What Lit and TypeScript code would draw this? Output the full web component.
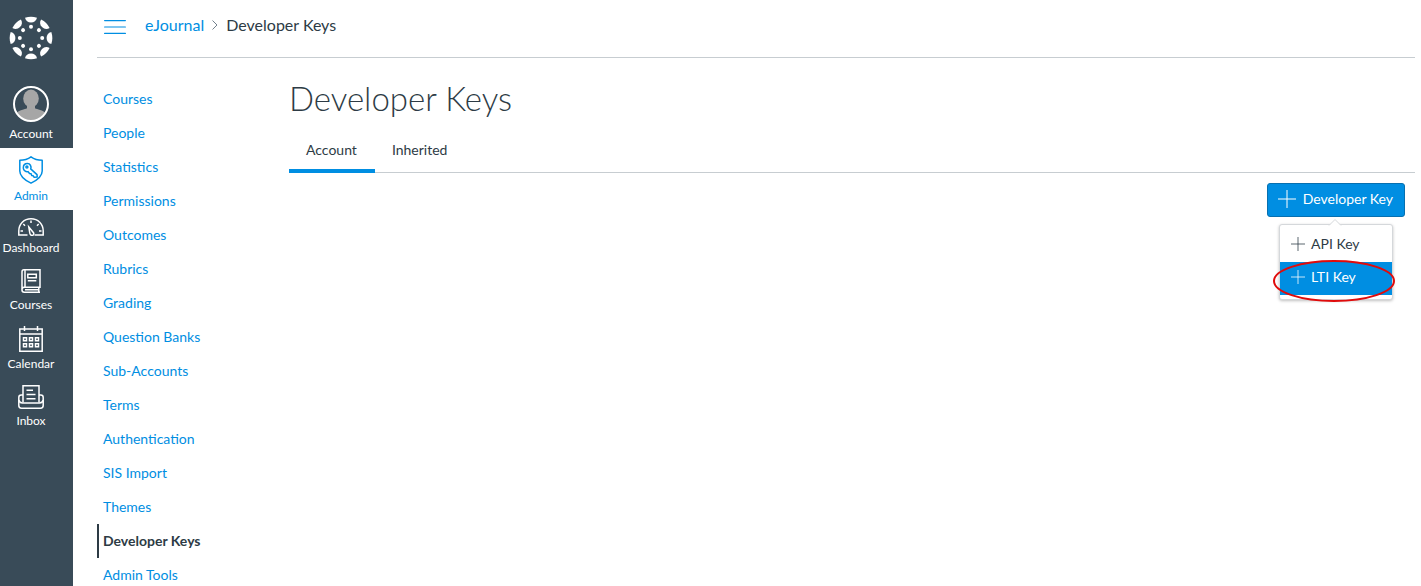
import { LitElement, html, css, svg } from "lit";
import { customElement, state } from "lit/decorators.js";

const ring = Array.from({ length: 8 }, (_, i) => i * 45);

const logo = html`<svg width="44" height="44" viewBox="0 0 44 44" fill="#fff" aria-hidden="true">
  ${ring.map(
    (a) => svg`<g transform=${`rotate(${a} 22 22)`}>
      <path d="M16 1.700 Q22 -.4 28 1.700 C27.300 4.900 25 6.400 22 6.400 C19 6.400 16.700 4.900 16 1.700Z"/>
      <circle cx="22" cy="10.800" r="2"/>
    </g>`
  )}
</svg>`;

const avatar = html`<svg width="36" height="36" viewBox="0 0 36 36" aria-hidden="true">
  <defs><clipPath id="face"><circle cx="18" cy="18" r="16.5"/></clipPath></defs>
  <g clip-path="url(#face)" fill="#a6a6a6">
    <ellipse cx="18" cy="12.5" rx="7.8" ry="9"/>
    <path d="M14 18h8v4.2c2 1.4 8 1.2 11 5.3V36H3v-8.5c3-4.1 9-3.9 11-5.3z"/>
  </g>
  <circle cx="18" cy="18" r="17" fill="none" stroke="#fff" stroke-width="2"/>
</svg>`;

const shield = html`<svg width="26" height="28" viewBox="0 0 26 28" fill="none" stroke="currentColor" stroke-width="1.5" stroke-linejoin="round" aria-hidden="true">
  <path d="M13 .8C10 3 5.5 4.2 1.8 4.2V15c0 5.5 5.7 9.5 11.2 12.2C18.500 24.5 24.2 20.5 24.2 15V4.2C20.5 4.2 16 3 13 .8z"/>
  <path d="M12.700 12.900l6.300 5.700.2 2.500-3 .2-1-1.500-1.500-.3-.6-1.700-1.600-.3-1.400-1.900c-2.200.6-4.800-1.100-4.800-3.700 0-2.500 1.800-4.300 4.200-4.300 2.500 0 4.200 2.600 3.200 5.300z"/>
  <circle cx="8.900" cy="11" r="1"/>
</svg>`;

const gauge = html`<svg width="26" height="18" viewBox="0 0 26 18" fill="none" stroke="currentColor" stroke-width="1.5" aria-hidden="true">
  <path d="M9.500 17H.8v-4C.8 6 6 .8 13 .8S25.200 6 25.200 13v4h-8.700"/>
  <path d="M10.800 9l4.700 5.700c1 2-1.300 3.500-2.800 2.200-.9-.8-.9-1.500-1-2.400z"/>
  <path d="M13 2.500V5M5.300 6l1.700 1.700M20.700 6L19 7.700M2.500 13H5M21 13h2.500"/>
</svg>`;

const book = html`<svg width="20" height="24" viewBox="0 0 20 24" fill="none" stroke="currentColor" stroke-width="1.5" aria-hidden="true">
  <path d="M1 20.500V2.800C1 1.500 1.800.8 3 .8h16v17.400H3.200c-3 0-3 5 0 5H19M4 .8v17.400M17.800 18.200v5M4 20.700h14"/>
  <path d="M6.800 5.200h8.500v3.500H6.800zM6.800 11.700h8.500"/>
</svg>`;

const calendar = html`<svg width="24" height="26" viewBox="0 0 24 26" fill="none" stroke="currentColor" stroke-width="1.5" aria-hidden="true">
  <path d="M.8 3h22.400v22.200H.8zM.8 8h22.400M5.500 0v5M18.500 0v5"/>
  <path d="M4.500 11.700h3v3h-3zM10.500 11.700h3v3h-3zM16.500 11.700h3v3h-3zM4.500 17.700h3v3h-3zM10.500 17.700h3v3h-3zM16.500 17.700h3v3h-3z"/>
</svg>`;

const inbox = html`<svg width="26" height="24" viewBox="0 0 26 24" fill="none" stroke="currentColor" stroke-width="1.5" aria-hidden="true">
  <path d="M5 17.500V.8h16v16.700M5 10H3.200C1.500 10 .8 11 .8 12.500v8c0 1.700 1 2.700 2.700 2.700h19c1.700 0 2.700-1 2.700-2.700v-8c0-1.500-.7-2.500-2.400-2.500H21"/>
  <path d="M.8 15c.5 2 1.700 3 3.700 3h17c2 0 3.200-1 3.700-3M8.500 5.200H15M8.500 9.500h9M8.500 13.800h9"/>
</svg>`;

const plus = (size: number) => html`<svg width=${size} height=${size} viewBox="0 0 18 18" stroke="currentColor" stroke-width="1" aria-hidden="true">
  <path d="M9 0v18M0 9h18"/>
</svg>`;

const globalItems = [
  { label: "Account", icon: avatar, kind: "profile" },
  { label: "Admin", icon: shield, kind: "active" },
  { label: "Dashboard", icon: gauge, kind: "" },
  { label: "Courses", icon: book, kind: "" },
  { label: "Calendar", icon: calendar, kind: "" },
  { label: "Inbox", icon: inbox, kind: "" },
];

const sections = [
  "Courses", "People", "Statistics", "Permissions", "Outcomes", "Rubrics", "Grading",
  "Question Banks", "Sub-Accounts", "Terms", "Authentication", "SIS Import", "Themes",
  "Developer Keys", "Admin Tools",
];

@customElement("global-nav")
class GlobalNav extends LitElement {
  static styles = css`
    :host { display: block; flex: none; width: 73px; background: #394b58; }
    .nav { display: flex; flex-direction: column; }
    .home { display: block; height: 44px; padding: 16px 11px 18px 9px; }
    svg { display: block; }
    .item {
      display: flex; flex-direction: column; align-items: center; gap: 4px;
      padding: 8px 11px 5px 0; color: #fff; text-decoration: none;
      font-size: 12px; line-height: 16px; white-space: nowrap;
    }
    .item.profile, .item.active { padding-bottom: 6px; }
    .item.active { background: #fff; color: #008ee2; }
  `;
  render() {
    return html`<nav class="nav" aria-label="Global navigation">
      <a class="home" href="#" aria-label="Home">${logo}</a>
      ${globalItems.map(
        ({ label, icon, kind }) => html`<a class="item ${kind}" href="#">${icon}<span>${label}</span></a>`
      )}
    </nav>`;
  }
}

@customElement("section-nav")
class SectionNav extends LitElement {
  static styles = css`
    :host { display: block; flex: none; width: 192px; }
    .list { list-style: none; margin: 0; padding: 24px 0 0; }
    .link {
      display: block; padding: 7px 4px; border-left: 2px solid transparent;
      color: #008ee2; font-size: 14px; line-height: 20px; text-decoration: none;
    }
    .link.active { color: #2d3b45; border-left-color: #2d3b45; font-weight: 700; }
  `;
  render() {
    return html`<nav aria-label="Account sections"><ul class="list">
      ${sections.map(
        (s) => html`<li><a class="link ${s === "Developer Keys" ? "active" : ""}" href="#">${s}</a></li>`
      )}
    </ul></nav>`;
  }
}

@customElement("key-menu")
class KeyMenu extends LitElement {
  static properties = { open: { state: true } };
  declare open: boolean;
  constructor() {
    super();
    this.open = true;
  }
  static styles = css`
    :host { display: block; position: relative; }
    svg { display: block; flex: none; }
    button { font-family: inherit; font-size: 14px; line-height: 20px; cursor: pointer; }
    .trigger {
      display: flex; align-items: center; gap: 7px; height: 34px; padding: 0 11px 2px 10px;
      color: #fff; background: #008ee2; border: 1px solid #0770b0; border-radius: 3px;
    }
    .menu {
      position: absolute; top: 41px; right: 12px; width: 114px; box-sizing: border-box;
      padding: 4px 0; border: 1px solid #d5d8db; border-radius: 3px; background: #fff;
      box-shadow: 0 1px 3px rgba(0, 0, 0, 0.25);
    }
    .arrow { position: absolute; top: -7px; left: 48px; }
    .option {
      display: flex; align-items: center; gap: 6px; width: 100%; height: 33px;
      padding: 0 11px 3px; border: 0; color: #2d3b45; background: #fff; text-align: left;
    }
    .option.highlighted { color: #fff; background: #008ee2; }
    .callout { position: absolute; top: 34px; left: -8px; pointer-events: none; }
  `;
  render() {
    return html`
      <button class="trigger" aria-haspopup="menu" aria-expanded=${this.open} @click=${() => (this.open = !this.open)}>
        ${plus(18)}<span>Developer Key</span>
      </button>
      ${this.open
        ? html`<div class="menu" role="menu">
            <svg class="arrow" width="14" height="8" viewBox="0 0 14 8" fill="#fff" aria-hidden="true">
              <path d="M1 7.500L7 1.500l6 6" stroke="#d5d8db"/>
            </svg>
            <button class="option" role="menuitem">${plus(14)}<span>API Key</span></button>
            <button class="option highlighted" role="menuitem">${plus(14)}<span>LTI Key</span></button>
            <svg class="callout" width="124" height="44" viewBox="0 0 124 44" fill="none" aria-hidden="true">
              <ellipse cx="62" cy="22" rx="60" ry="20" stroke="#e00b0b" stroke-width="2"/>
            </svg>
          </div>`
        : ""}
    `;
  }
}

@customElement("app-root")
class AppRoot extends LitElement {
  @state() private tab = "Account";

  static styles = css`
    :host {
      display: flex; height: 100vh; overflow: hidden; background: #fff; color: #2d3b45;
      font-family: Lato, "Liberation Sans", sans-serif;
    }
    .page { flex: 1; min-width: 0; padding: 0 6px 0 24px; }
    .topbar {
      display: flex; align-items: center; height: 57px; box-sizing: content-box;
      border-bottom: 1px solid #c7cdd1;
    }
    .toggle { display: block; margin: 0 19px 4px 7px; padding: 0; border: 0; background: none; color: #008ee2; cursor: pointer; }
    svg { display: block; }
    .crumbs { display: flex; align-items: center; gap: 8px; padding-bottom: 8px; font-size: 16px; line-height: 24px; }
    .crumb-link { color: #008ee2; text-decoration: none; }
    .columns { display: flex; }
    .content { flex: 1; min-width: 0; }
    .title { margin: 17px 0 0; font-size: 33px; line-height: 46px; font-weight: 300; }
    .tabs { display: flex; margin-top: 7px; border-bottom: 1px solid #c7cdd1; }
    .tab {
      margin-bottom: -1px; padding: 12px 18px 9px 17px; border: 0; border-bottom: 4px solid transparent;
      background: none; color: inherit; font-family: inherit; font-size: 14px; line-height: 20px; cursor: pointer;
    }
    .tab[aria-selected="true"] { border-bottom-color: #008ee2; }
    .actions { display: flex; justify-content: flex-end; padding: 10px 10px 0 0; }
  `;

  render() {
    return html`
      <global-nav></global-nav>
      <div class="page">
        <header class="topbar">
          <button class="toggle" aria-label="Toggle section navigation">
            <svg width="22" height="14" viewBox="0 0 22 14" stroke="currentColor" stroke-width="1.2" stroke-linecap="round" aria-hidden="true">
              <path d="M.6 .6h20.8M.6 7h20.8M.6 13.400h20.8"/>
            </svg>
          </button>
          <nav class="crumbs" aria-label="Breadcrumb">
            <a class="crumb-link" href="#">eJournal</a>
            <svg width="6" height="10" viewBox="0 0 6 10" fill="none" stroke="#73818c" aria-hidden="true"><path d="M.5 .5L5 5 .5 9.500"/></svg>
            <span>Developer Keys</span>
          </nav>
        </header>
        <div class="columns">
          <section-nav></section-nav>
          <main class="content">
            <h1 class="title">Developer Keys</h1>
            <div class="tabs" role="tablist">
              ${["Account", "Inherited"].map(
                (t) => html`<button class="tab" role="tab" aria-selected=${this.tab === t} @click=${() => (this.tab = t)}>${t}</button>`
              )}
            </div>
            <div class="actions"><key-menu></key-menu></div>
          </main>
        </div>
      </div>
    `;
  }
}
